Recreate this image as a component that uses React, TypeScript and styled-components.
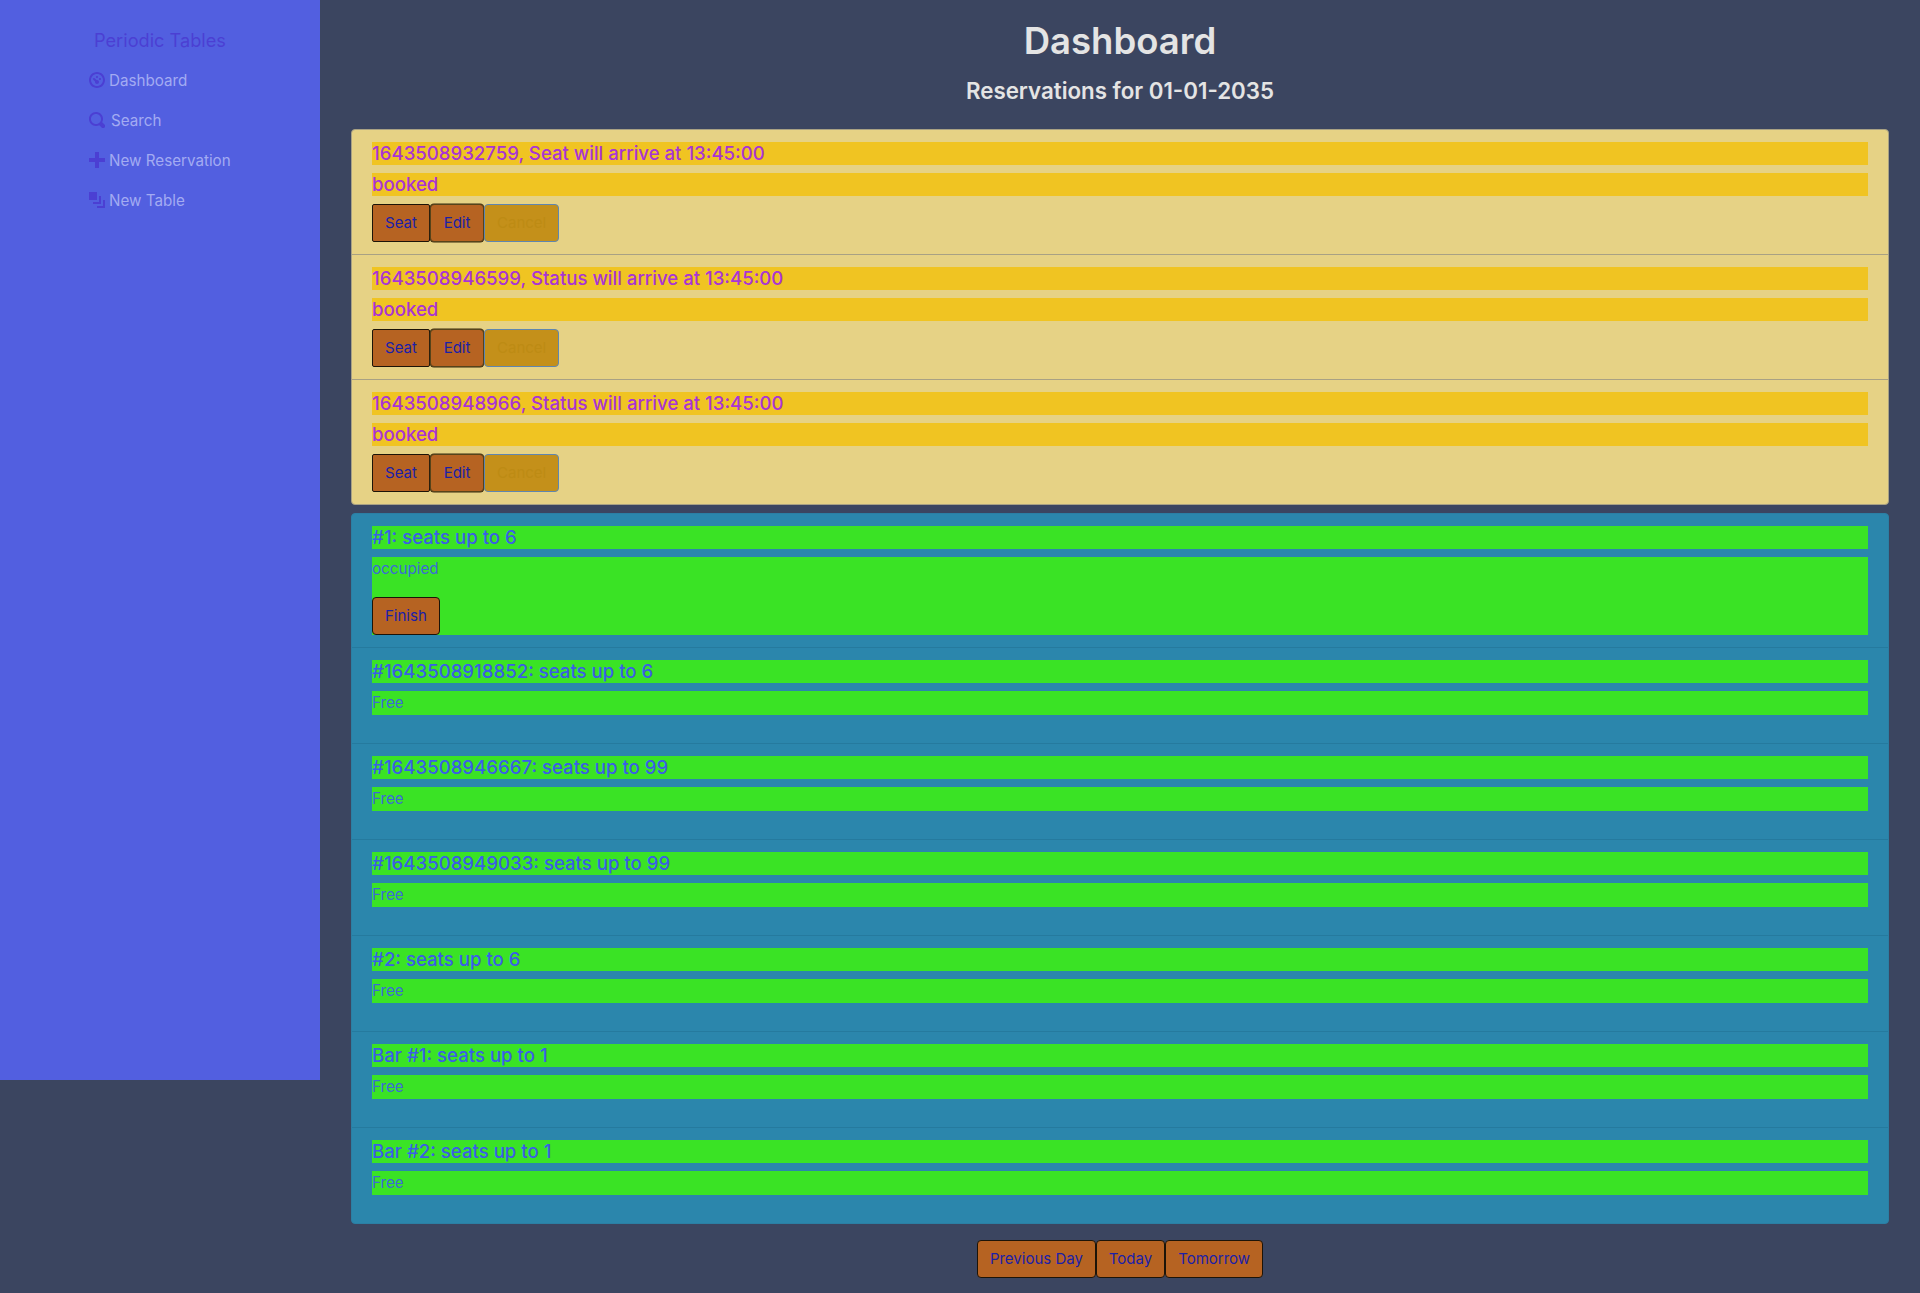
import styled, { createGlobalStyle } from "styled-components";

const GlobalStyle = createGlobalStyle`
  * { box-sizing: border-box; }
  html, body { margin: 0; padding: 0; }
  body {
    background-color: #3b4560;
    font-family: Inter, "Liberation Sans", sans-serif;
    font-size: 16px;
    line-height: 1.5;
  }
`;

const Page = styled.div`
  display: flex;
  align-items: flex-start;
  width: 1920px;
  height: 1293px;
  overflow: hidden;
`;

const Sidebar = styled.nav`
  width: 320px;
  height: 1080px;
  flex-shrink: 0;
  background-color: #525fe0;
  display: flex;
  flex-direction: column;
  padding-top: 28px;
`;

const Brand = styled.div`
  font-size: 18.2px;
  line-height: 24px;
  color: #4b3fd3;
  text-align: center;
  margin-bottom: 9px;
`;

const NavList = styled.ul`
  list-style: none;
  margin: 0;
  padding: 0 0 0 89px;
`;

const NavItem = styled.li`
  height: 40px;
  display: flex;
  align-items: center;
  color: #a3abf2;
  font-size: 15.2px;
`;

const NavIcon = styled.svg`
  width: 16px;
  height: 16px;
  fill: #4b3fd3;
  flex-shrink: 0;
  margin-right: 4px;
  margin-top: -2px;
`;

const SpacedLabel = styled.span<{ $gap: boolean }>`
  margin-left: ${(p) => (p.$gap ? "2px" : "0")};
`;

const Main = styled.main`
  flex: 1;
  min-width: 0;
  padding: 17px 31px 0;
  display: flex;
  flex-direction: column;
`;

const Title = styled.h1`
  margin: 0 0 11px;
  font-size: 36.5px;
  line-height: 48px;
  font-weight: 600;
  color: #e4e4e4;
  text-align: center;
`;

const Subtitle = styled.h4`
  margin: 0 0 24px;
  font-size: 22.3px;
  line-height: 29px;
  font-weight: 600;
  color: #e4e4e4;
  text-align: center;
`;

const Card = styled.section<{ $tone: "reservation" | "table" }>`
  border-radius: 4px;
  border: 1px solid ${(p) => (p.$tone === "reservation" ? "#a8a184" : "#2b7fa4")};
  background-color: ${(p) => (p.$tone === "reservation" ? "#e6d285" : "#2b86ac")};
  margin-bottom: ${(p) => (p.$tone === "reservation" ? "8px" : "16px")};
`;

const Item = styled.div<{ $tone: "reservation" | "table" }>`
  padding: 12px 20px;
  border-bottom: 1px solid ${(p) => (p.$tone === "reservation" ? "#a8a184" : "#257a9e")};

  &:last-child {
    border-bottom: none;
  }
`;

const ReservationHeading = styled.h5`
  margin: 0 0 8px;
  font-size: 18.6px;
  line-height: 23px;
  font-weight: 500;
  background-color: #f0c422;
  color: #a934d5;
`;

const TableHeading = styled.h5`
  margin: 0 0 8px;
  font-size: 18.6px;
  line-height: 23px;
  font-weight: 500;
  background-color: #3ae325;
  color: #3a5ee6;
`;

const TableBody = styled.div<{ $free: boolean }>`
  background-color: #3ae325;
  color: #3a6ad8;
  font-size: 15.2px;
  margin-bottom: ${(p) => (p.$free ? "16px" : "0")};
`;

const TableStatus = styled.p<{ $free: boolean }>`
  margin: 0 0 ${(p) => (p.$free ? "0" : "16px")};
  line-height: 24px;
`;

const ButtonRow = styled.div`
  display: flex;
`;

const Button = styled.button`
  display: block;
  height: 38px;
  padding: 0 12px;
  border: 1px solid #1c1408;
  border-radius: 4px;
  background-color: #b66322;
  color: #1a20a8;
  font-family: inherit;
  font-size: 15px;
  line-height: 24px;
`;

const SeatButton = styled(Button)`
  border-radius: 2px;
  width: 58px;
`;

const EditButton = styled(Button)`
  width: 54px;
  border-color: #56431a;
  box-shadow: 0 0 0 0.5px #3b2b10;
`;

const CancelButton = styled(Button)`
  width: 75px;
  background-color: #c4901a;
  border-color: #5f86b0;
  color: #bd8b14;
`;

const Pager = styled.div`
  display: flex;
  justify-content: center;
`;

const reservations = [
  "1643508932759, Seat will arrive at 13:45:00",
  "1643508946599, Status will arrive at 13:45:00",
  "1643508948966, Status will arrive at 13:45:00",
];

const tables = [
  "#1643508918852: seats up to 6",
  "#1643508946667: seats up to 99",
  "#1643508949033: seats up to 99",
  "#2: seats up to 6",
  "Bar #1: seats up to 1",
  "Bar #2: seats up to 1",
];

const navLinks = [
  {
    label: "Dashboard",
    gap: false,
    d: "M4 0c-2.2 0-4 1.8-4 4s1.8 4 4 4 4-1.8 4-4-1.8-4-4-4zm0 1c1.66 0 3 1.34 3 3s-1.34 3-3 3-3-1.34-3-3 1.34-3 3-3zm0 1c-.28 0-.5.22-.5.5s.22.5.5.5.5-.22.5-.5-.22-.5-.5-.5zm-1.66 1a.5.5 0 0 0-.19.84l.91.91c-.02.08-.06.16-.06.25 0 .55.45 1 1 1s1-.45 1-1-.45-1-1-1c-.09 0-.17.04-.25.06l-.91-.91a.5.5 0 0 0-.44-.16.5.5 0 0 0-.06 0zm3.16 0c-.28 0-.5.22-.5.5s.22.5.5.5.5-.22.5-.5-.22-.5-.5-.5z",
  },
  {
    label: "Search",
    gap: true,
    d: "M3.5 0c-1.93 0-3.5 1.57-3.5 3.5s1.57 3.5 3.5 3.5c.59 0 1.17-.14 1.66-.41a1 1 0 0 0 .13.13l1 1a1.02 1.02 0 1 0 1.44-1.44l-1-1a1 1 0 0 0-.16-.13c.27-.49.44-1.06.44-1.66 0-1.93-1.57-3.5-3.5-3.5zm0 1c1.39 0 2.5 1.11 2.5 2.5 0 .66-.24 1.27-.66 1.72-.01.01-.02.02-.03.03a1 1 0 0 0-.13.13c-.44.4-1.04.63-1.69.63-1.39 0-2.5-1.11-2.5-2.5s1.11-2.5 2.5-2.5z",
  },
  { label: "New Reservation", gap: false, d: "M3 0v3h-3v2h3v3h2v-3h3v-2h-3v-3h-2z" },
  {
    label: "New Table",
    gap: false,
    d: "M0 0v4h4v-4h-4zm5 2v3h-3v1h4v-4h-1zm2 2v3h-3v1h4v-4h-1z",
  },
];

export default function App() {
  return (
    <>
      <GlobalStyle />
      <Page>
        <Sidebar>
          <Brand>Periodic Tables</Brand>
          <NavList>
            {navLinks.map((link) => (
              <NavItem key={link.label}>
                <NavIcon viewBox="0 0 8 8">
                  <path d={link.d} />
                </NavIcon>
                <SpacedLabel $gap={link.gap}>{link.label}</SpacedLabel>
              </NavItem>
            ))}
          </NavList>
        </Sidebar>
        <Main>
          <Title>Dashboard</Title>
          <Subtitle>Reservations for 01-01-2035</Subtitle>
          <Card $tone="reservation">
            {reservations.map((text) => (
              <Item $tone="reservation" key={text}>
                <ReservationHeading>{text}</ReservationHeading>
                <ReservationHeading as="h6">booked</ReservationHeading>
                <ButtonRow>
                  <SeatButton>Seat</SeatButton>
                  <EditButton>Edit</EditButton>
                  <CancelButton disabled>Cancel</CancelButton>
                </ButtonRow>
              </Item>
            ))}
          </Card>
          <Card $tone="table">
            <Item $tone="table">
              <TableHeading>#1: seats up to 6</TableHeading>
              <TableBody $free={false}>
                <TableStatus $free={false}>occupied</TableStatus>
                <Button>Finish</Button>
              </TableBody>
            </Item>
            {tables.map((text) => (
              <Item $tone="table" key={text}>
                <TableHeading>{text}</TableHeading>
                <TableBody $free>
                  <TableStatus $free>Free</TableStatus>
                </TableBody>
              </Item>
            ))}
          </Card>
          <Pager>
            <Button>Previous Day</Button>
            <Button>Today</Button>
            <Button>Tomorrow</Button>
          </Pager>
        </Main>
      </Page>
    </>
  );
}
